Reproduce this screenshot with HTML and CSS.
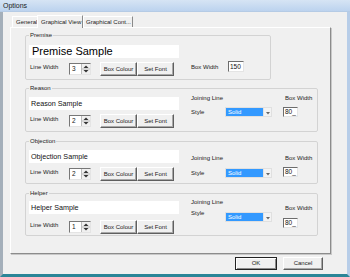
FILE: index.html
```html
<!DOCTYPE html>
<html>
<head>
<meta charset="utf-8">
<title>Options</title>
<link rel="stylesheet" href="styles.css">
</head>
<body>
<div class="window">
  <div class="titlebar">Options</div>
  <div class="frame">
    <div class="tabs">
      <div class="tab first">General</div>
      <div class="tab active">Graphical View</div>
      <div class="tab">Graphical Cont...</div>
    </div>
    <div class="panel">

      <fieldset class="group g-premise">
        <legend>Premise</legend>
        <div class="body">
          <div class="left">
            <div class="sample big">Premise Sample</div>
            <div class="controls">
              <span class="lw">Line Width</span>
              <div class="spin"><span class="val">3</span><span class="arrows"><svg width="8" height="10" viewBox="0 0 8 10"><path d="M4 1.5 L6.5 4 L1.5 4 Z" fill="#333"/><path d="M1.5 6 L6.5 6 L4 8.5 Z" fill="#333"/><line x1="0" y1="5" x2="8" y2="5" stroke="#999" stroke-width="0.6"/></svg></span></div>
              <div class="btn">Box Colour</div>
              <div class="btn">Set Font</div>
            </div>
          </div>
          <div class="premise-bw">
            <span class="lbl">Box Width</span>
            <div class="field wide">150</div>
          </div>
        </div>
      </fieldset>

      <fieldset class="group g-reason">
        <legend>Reason</legend>
        <div class="body">
          <div class="left">
            <div class="sample">Reason Sample</div>
            <div class="controls">
              <span class="lw">Line Width</span>
              <div class="spin"><span class="val">2</span><span class="arrows"><svg width="8" height="10" viewBox="0 0 8 10"><path d="M4 1.5 L6.5 4 L1.5 4 Z" fill="#333"/><path d="M1.5 6 L6.5 6 L4 8.5 Z" fill="#333"/><line x1="0" y1="5" x2="8" y2="5" stroke="#999" stroke-width="0.6"/></svg></span></div>
              <div class="btn">Box Colour</div>
              <div class="btn">Set Font</div>
            </div>
          </div>
          <div class="joining">
            <div class="lbl jl">Joining Line</div>
            <div class="style-row">
              <span class="lbl st">Style</span>
              <div class="combo"><span class="sel">Solid</span><span class="drop"><svg width="4" height="3" viewBox="0 0 4 3"><path d="M0 0 L4 0 L2 2.5 Z" fill="#666"/></svg></span></div>
            </div>
          </div>
          <div class="bw">
            <div class="lbl bwl">Box Width</div>
            <div class="field">80_</div>
          </div>
        </div>
      </fieldset>

      <fieldset class="group g-objection">
        <legend>Objection</legend>
        <div class="body">
          <div class="left">
            <div class="sample">Objection Sample</div>
            <div class="controls">
              <span class="lw">Line Width</span>
              <div class="spin"><span class="val">2</span><span class="arrows"><svg width="8" height="10" viewBox="0 0 8 10"><path d="M4 1.5 L6.5 4 L1.5 4 Z" fill="#333"/><path d="M1.5 6 L6.5 6 L4 8.5 Z" fill="#333"/><line x1="0" y1="5" x2="8" y2="5" stroke="#999" stroke-width="0.6"/></svg></span></div>
              <div class="btn">Box Colour</div>
              <div class="btn">Set Font</div>
            </div>
          </div>
          <div class="joining">
            <div class="lbl jl">Joining Line</div>
            <div class="style-row">
              <span class="lbl st">Style</span>
              <div class="combo"><span class="sel">Solid</span><span class="drop"><svg width="4" height="3" viewBox="0 0 4 3"><path d="M0 0 L4 0 L2 2.5 Z" fill="#666"/></svg></span></div>
            </div>
          </div>
          <div class="bw">
            <div class="lbl bwl">Box Width</div>
            <div class="field">80_</div>
          </div>
        </div>
      </fieldset>

      <fieldset class="group g-helper">
        <legend>Helper</legend>
        <div class="body">
          <div class="left">
            <div class="sample">Helper Sample</div>
            <div class="controls">
              <span class="lw">Line Width</span>
              <div class="spin"><span class="val">1</span><span class="arrows"><svg width="8" height="10" viewBox="0 0 8 10"><path d="M4 1.5 L6.5 4 L1.5 4 Z" fill="#333"/><path d="M1.5 6 L6.5 6 L4 8.5 Z" fill="#333"/><line x1="0" y1="5" x2="8" y2="5" stroke="#999" stroke-width="0.6"/></svg></span></div>
              <div class="btn">Box Colour</div>
              <div class="btn">Set Font</div>
            </div>
          </div>
          <div class="joining">
            <div class="lbl jl">Joining Line</div>
            <div class="style-row">
              <span class="lbl st">Style</span>
              <div class="combo"><span class="sel">Solid</span><span class="drop"><svg width="4" height="3" viewBox="0 0 4 3"><path d="M0 0 L4 0 L2 2.5 Z" fill="#666"/></svg></span></div>
            </div>
          </div>
          <div class="bw">
            <div class="lbl bwl">Box Width</div>
            <div class="field">80_</div>
          </div>
        </div>
      </fieldset>

    </div>
    <div class="footer">
      <div class="btn dlg default">OK</div>
      <div class="btn dlg">Cancel</div>
    </div>
  </div>
</div>
</body>
</html>
```

FILE: styles.css
```css
* { box-sizing: border-box; }

html, body {
  margin: 0;
  padding: 0;
  background: #f0f0f0;
}

body {
  font-family: "Liberation Sans", Arial, sans-serif;
  font-size: 6.5px;
  color: #222;
}

.window {
  width: 350px;
  height: 277px;
  display: flex;
  flex-direction: column;
  overflow: hidden;
}

.titlebar {
  height: 12px;
  line-height: 12px;
  padding-left: 3px;
  font-size: 7px;
  color: #1a1a1a;
  background: linear-gradient(#d6e4f4, #bcd3ee);
  border-bottom: 1px solid #b5cbe5;
}

.frame {
  flex: 1;
  display: flex;
  flex-direction: column;
  background: #f0f0f0;
  border-left: 3px solid #a4afba;
  border-right: 3px solid #b7cde8;
  border-bottom: 3px solid #2b8597;
}

/* tabs */
.tabs {
  display: flex;
  align-items: flex-end;
  height: 15px;
  padding-left: 9px;
  position: relative;
  z-index: 2;
}

.tab {
  height: 11px;
  line-height: 10px;
  padding: 0 3px;
  background: #f0f0f0;
  border-top: 1px solid #fff;
  border-left: 1px solid #fff;
  border-right: 1px solid #8a8a8a;
  margin-bottom: 0;
  font-size: 6px;
  white-space: nowrap;
}
.tab.first { width: 26px; padding-left: 3px; }
.tab.active {
  height: 13px;
  line-height: 12px;
  width: 46px;
  padding-left: 3px;
  margin-bottom: -1px;
  margin-left: -1px;
}
.tab:last-child { width: 50px; padding-left: 2px; }

/* panel */
.panel {
  margin-left: 7px;
  width: 321px;
  height: 227px;
  padding-top: 3px;
  border-top: 1px solid #fff;
  border-left: 1px solid #fff;
  border-right: 1px solid #8c8c8c;
  border-bottom: 1px solid #8c8c8c;
  box-shadow: 1px 1px 0 #c8c8c8;
  display: flex;
  flex-direction: column;
}

.group {
  margin: 0 0 0 14px;
  padding: 0;
  border: 1px solid #d3d3d3;
  border-radius: 2px;
  width: 293px;
  min-width: 0;
}
.group legend {
  margin-left: 3px;
  padding: 0 1px;
  font-size: 6px;
  line-height: 8px;
}
.g-premise { width: 246px; }
.g-reason { margin-top: 4px; }
.g-objection { margin-top: 5px; }
.g-helper { margin-top: 5px; }

.body {
  display: flex;
  align-items: flex-start;
}
.g-premise .body { height: 40px; }
.g-reason .body { height: 39px; }
.g-objection .body { height: 38px; }
.g-helper .body { height: 38px; }

.left {
  width: 153px;
  padding-left: 3px;
  display: flex;
  flex-direction: column;
}

.sample {
  width: 150px;
  height: 13px;
  background: #fff;
  padding-left: 2px;
  font-size: 7.2px;
  line-height: 13px;
  color: #111;
  white-space: nowrap;
}
.sample.big {
  font-size: 11px;
  line-height: 13px;
  padding-left: 3px;
  color: #000;
}
.g-premise .sample { margin-top: 6px; }
.g-reason .sample { margin-top: 5px; }
.g-objection .sample { margin-top: 5px; }
.g-helper .sample { margin-top: 4px; }

.controls {
  display: flex;
  align-items: center;
  height: 15px;
}
.g-premise .controls { margin-top: 3px; }
.g-reason .controls { margin-top: 3px; }
.g-objection .controls { margin-top: 3px; }
.g-helper .controls { margin-top: 5px; }

.lw {
  width: 40px;
  padding-left: 1px;
  font-size: 6px;
  margin-top: -3px;
  white-space: nowrap;
}

.spin {
  width: 22px;
  height: 12px;
  background: #fff;
  border-top: 1px solid #777;
  border-left: 1px solid #777;
  border-right: 1px solid #e4e4e4;
  border-bottom: 1px solid #e4e4e4;
  display: flex;
  align-items: stretch;
}
.spin .val {
  flex: 1;
  font-size: 6.5px;
  line-height: 10px;
  padding-left: 2px;
}
.spin .arrows {
  width: 9px;
  background: #f0f0f0;
  border-left: 1px solid #bdbdbd;
  display: flex;
  align-items: center;
  justify-content: center;
}
.spin svg { display: block; }

.btn {
  width: 37px;
  height: 14px;
  line-height: 12px;
  text-align: center;
  font-size: 6px;
  background: #f0f0f0;
  border-top: 1px solid #fff;
  border-left: 1px solid #fff;
  border-right: 1px solid #5f5f5f;
  border-bottom: 1px solid #5f5f5f;
  box-shadow: inset -1px -1px 0 #a8a8a8;
  white-space: nowrap;
}
.controls .btn:nth-of-type(1) { margin-left: 5px; }
.controls .btn:nth-of-type(2) { margin-left: 9px; }

.lbl {
  font-size: 6px;
  line-height: 8px;
  white-space: nowrap;
}

.premise-bw {
  display: flex;
  align-items: center;
  margin-top: 22px;
  margin-left: 12px;
}
.premise-bw .lbl { width: 37px; }

.field {
  width: 15px;
  height: 10px;
  background: #fff;
  border-top: 1px solid #6d6d6d;
  border-left: 1px solid #6d6d6d;
  border-right: 1px solid #e4e4e4;
  border-bottom: 1px solid #e4e4e4;
  font-size: 6.5px;
  line-height: 8px;
  padding-left: 1px;
  color: #111;
}
.field.wide { width: 16px; height: 11px; line-height: 9px; }

.joining {
  margin-left: 12px;
  width: 81px;
  display: flex;
  flex-direction: column;
}
.style-row {
  display: flex;
  align-items: center;
}
.style-row .st { width: 34px; }

.combo {
  width: 47px;
  height: 10px;
  display: flex;
  background: #fff;
  border: 1px solid #e0e0e0;
}
.combo .sel {
  width: 37px;
  background: #3399ff;
  color: #fff;
  font-size: 6px;
  line-height: 8px;
  padding-left: 2px;
}
.combo .drop {
  flex: 1;
  background: #f3f3f3;
  border-left: 1px solid #e3e3e3;
  display: flex;
  align-items: flex-end;
  justify-content: center;
  padding-bottom: 1px;
}
.combo svg { display: block; }

.bw {
  margin-left: 11px;
  display: flex;
  flex-direction: column;
}
.bwl { padding-left: 2px; }

/* per-group vertical positions of the right-hand fields */
.g-reason .jl { margin-top: 2px; }
.g-reason .style-row { margin-top: 5px; }
.g-reason .bwl { margin-top: 2px; }
.g-reason .bw .field { margin-top: 5px; }

.g-objection .jl { margin-top: 9px; }
.g-objection .style-row { margin-top: 6px; }
.g-objection .bwl { margin-top: 9px; }
.g-objection .bw .field { margin-top: 5px; }

.g-helper .jl { margin-top: 1px; }
.g-helper .style-row { margin-top: 3px; align-items: flex-start; }
.g-helper .style-row .combo { margin-top: 3px; }
.g-helper .bwl { margin-top: 7px; }
.g-helper .bw .field { margin-top: 6px; }

/* footer */
.footer {
  display: flex;
  justify-content: flex-end;
  padding-top: 3px;
  padding-right: 24px;
}
.btn.dlg {
  height: 13px;
  line-height: 11px;
  width: 40px;
}
.btn.default {
  width: 42px;
  margin-right: 6px;
  border: 1px solid #222;
  box-shadow: inset 1px 1px 0 #fff, inset -1px -1px 0 #8a8a8a;
}
```
